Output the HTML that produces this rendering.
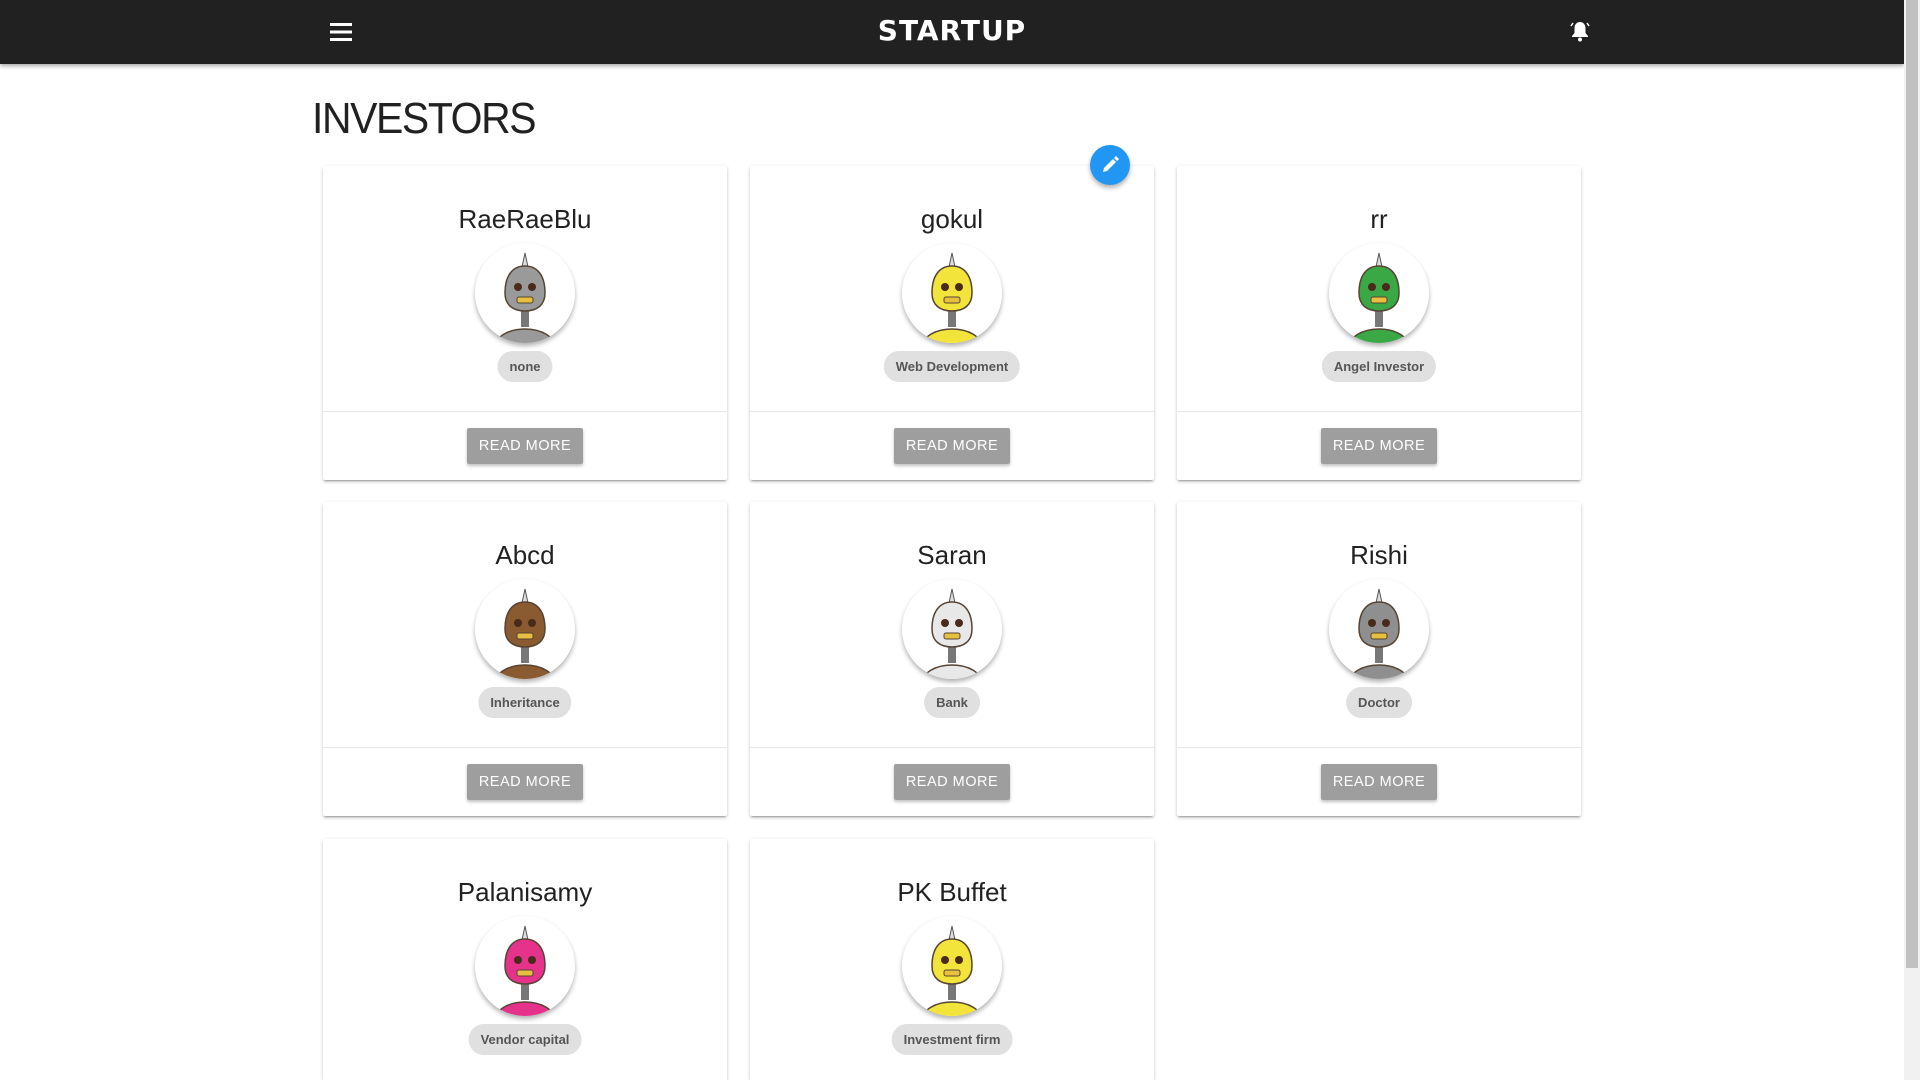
<!DOCTYPE html>
<html><head><meta charset="utf-8">
<style>
*{box-sizing:border-box;margin:0;padding:0}
html,body{width:1920px;height:1080px;overflow:hidden;background:#fff;font-family:"Liberation Sans","DejaVu Sans",sans-serif}
#wrap{position:relative;width:1920px;height:1080px;overflow:hidden}
.hdr{position:absolute;left:0;top:0;width:1904px;height:64px;background:#212121;box-shadow:0 2px 4px rgba(0,0,0,.35);z-index:5}
.logo{position:absolute;left:0;width:1904px;top:14px;text-align:center;color:#fff;font-weight:900;font-size:28px;letter-spacing:1px;font-family:"DejaVu Sans","Liberation Sans",sans-serif}
.sb{position:absolute;right:0;top:0;width:16px;height:1080px;background:#f1f1f1;z-index:6}
.thumb{position:absolute;right:2px;top:0;width:12px;height:968px;background:#c1c1c1}
h1{position:absolute;left:312px;top:94px;font-weight:normal;font-size:44px;color:#212121;letter-spacing:-1.5px;transform:scaleX(.93);transform-origin:left}
.card{position:absolute;width:404px;height:314px;background:#fff;border-radius:2px;box-shadow:0 2px 2px rgba(0,0,0,.14),0 1px 5px rgba(0,0,0,.12),0 3px 1px -2px rgba(0,0,0,.2);text-align:center}
.card.last{height:241px;border-radius:2px 2px 0 0}
.name{position:absolute;top:38px;left:0;width:100%;font-size:26px;color:#212121}
.av{position:absolute;top:77px;left:152px;width:100px;height:100px;border-radius:50%;background:#fff;box-shadow:0 3px 5px rgba(0,0,0,.3);overflow:hidden}
.chip{position:absolute;top:185px;left:50%;transform:translateX(-50%);height:31px;line-height:31px;padding:0 12px;border-radius:16px;background:#e0e0e0;color:#555;font-size:13px;font-weight:bold;white-space:nowrap}
.div{position:absolute;top:245px;left:0;width:100%;border-top:1px solid #e6e6e6}
.btn{position:absolute;top:262px;left:144px;width:116px;height:36px;line-height:36px;background:#9e9e9e;color:#fff;font-size:14.5px;border-radius:2px;box-shadow:0 2px 3px rgba(0,0,0,.25);letter-spacing:.5px}
.fab{position:absolute;left:1090px;top:145px;width:40px;height:40px;border-radius:50%;background:#2196f3;box-shadow:0 3px 5px rgba(0,0,0,.3);z-index:3}
</style></head><body>
<div id="wrap">
<div class="hdr">
<svg style="position:absolute;left:330px;top:22px" width="22" height="20" viewBox="0 0 22 20"><rect y="1" width="22" height="3" fill="#fff"/><rect y="8.5" width="22" height="3" fill="#fff"/><rect y="16" width="22" height="3" fill="#fff"/></svg>
<div class="logo">STARTUP</div>
<svg style="position:absolute;left:1570px;top:20px" width="20" height="22" viewBox="0 0 20 22"><path d="M10 2c-3.5 0-5.5 3-5.5 6v5L2 16v1h16v-1l-2.5-3V8c0-3-2-6-5.5-6z" fill="#fff"/><circle cx="10" cy="19.5" r="2" fill="#fff"/><path d="M3 3L1 6M17 3l2 3" stroke="#fff" stroke-width="1.5"/></svg>
</div>
<div class="sb"><div class="thumb"></div></div>
<h1>INVESTORS</h1>
<div class="fab"><svg width="40" height="40" viewBox="0 0 40 40"><path d="M13 27l1-4 9-9 3 3-9 9z" fill="#fff"/><path d="M24 13l2-2 3 3-2 2z" fill="#fff"/></svg></div>
<div id="cards"></div>
</div>
<script>
var d=[["RaeRaeBlu","none","#9a9a9a",323,166],["gokul","Web Development","#f2e43a",750,166],["rr","Angel Investor","#3aa845",1177,166],
["Abcd","Inheritance","#8a5a30",323,502],["Saran","Bank","#e8e8e8",750,502],["Rishi","Doctor","#8f8f8f",1177,502],
["Palanisamy","Vendor capital","#e5338c",323,839],["PK Buffet","Investment firm","#f2e43a",750,839]];
var h="";
d.forEach(function(c){
var last=c[4]>800;
var r='<svg width="100" height="100" viewBox="0 0 100 100"><path d="M50 10l3 14h-6z" fill="#ddd" stroke="#555" stroke-width="1"/><rect x="46" y="66" width="8" height="18" fill="#777"/><ellipse cx="50" cy="104" rx="30" ry="18" fill="'+c[2]+'" stroke="#543" stroke-width="1.5"/><path d="M30 50c0-18 8-27 20-27s20 9 20 27c0 12-8 18-20 18s-20-6-20-18z" fill="'+c[2]+'" stroke="#543" stroke-width="1.5"/><circle cx="43" cy="44" r="4" fill="#4a2a1a"/><circle cx="57" cy="44" r="4" fill="#4a2a1a"/><rect x="42" y="54" width="16" height="6" rx="2" fill="#e8c040" stroke="#543"/></svg>';
h+='<div class="card'+(last?' last':'')+'" style="left:'+c[3]+'px;top:'+c[4]+'px"><div class="name">'+c[0]+'</div><div class="av">'+r+'</div><div class="chip">'+c[1]+'</div>'+(last?'':'<div class="div"></div><div class="btn">READ MORE</div>')+'</div>';
});
document.getElementById("cards").innerHTML=h;
</script>
</body></html>
